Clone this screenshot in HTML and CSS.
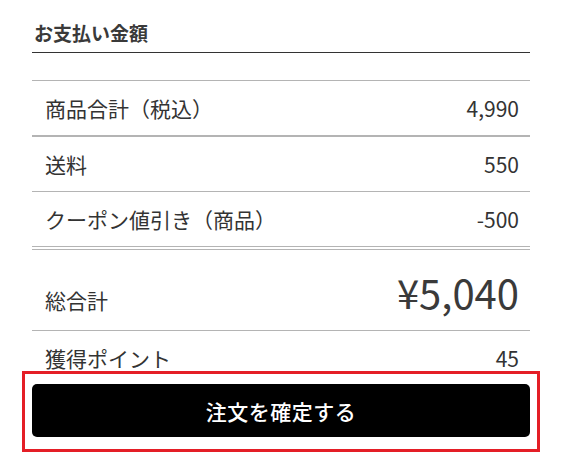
FILE: index.html
```html
<!DOCTYPE html>
<html lang="ja">
<head>
<meta charset="utf-8">
<title>お支払い金額</title>
<link rel="stylesheet" href="styles.css">
</head>
<body>
<main class="summary">
  <h2 class="title">お支払い金額</h2>
  <ul class="list">
    <li class="row row-first"><span>商品合計（税込）</span><span class="num">4,990</span></li>
    <li class="row"><span>送料</span><span class="num">550</span></li>
    <li class="row row-last"><span>クーポン値引き（商品）</span><span class="num">-500</span></li>
    <li class="row row-total"><span>総合計</span><span class="big">¥5,040</span></li>
    <li class="row row-points"><span>獲得ポイント</span><span class="num">45</span></li>
  </ul>
</main>
<div class="footer">
  <button class="confirm" type="button">注文を確定する</button>
</div>
</body>
</html>
```

FILE: styles.css
```css
html, body {
  margin: 0;
  padding: 0;
  background: #fff;
}

body {
  font-family: "Noto Sans CJK JP", "Noto Sans", sans-serif;
  color: #333;
  height: 472px;
  overflow: hidden;
}

.summary {
  margin: 0 34px 0 32px;
}

.title {
  margin: 0;
  padding: 20px 0 6px 2px;
  font-size: 19px;
  line-height: 26px;
  font-weight: 700;
  color: #3a3a3a;
  border-bottom: 1px solid #333;
}

.list {
  list-style: none;
  margin: 27px 0 0;
  padding: 0;
  border-top: 1px solid #b4b4b4;
}

.row {
  display: flex;
  justify-content: space-between;
  align-items: center;
  height: 54px;
  padding: 0 11px 0 13px;
  font-size: 21px;
  line-height: 30px;
  border-bottom: 1px solid #b4b4b4;
}

.row-first {
  border-bottom-width: 2px;
}

.row-last {
  height: 54px;
  border-bottom: 4px double #b4b4b4;
}

.row-total {
  height: auto;
  align-items: baseline;
  padding-top: 18px;
  padding-bottom: 14px;
}

.big {
  font-size: 40px;
  line-height: 48px;
  color: #3a3a3a;
}

.row-points {
  border-bottom: none;
}

.footer {
  position: fixed;
  left: 22px;
  top: 371px;
  width: 518px;
  height: 81px;
  box-sizing: border-box;
  border: 3px solid #e41e26;
  background: #fff;
  padding: 10px 7px 0;
}

.confirm {
  display: block;
  width: 100%;
  height: 53px;
  border: none;
  border-radius: 5px;
  background: #000;
  color: #fff;
  font-family: "Noto Sans CJK JP", "Noto Sans", sans-serif;
  font-size: 21px;
  font-weight: 500;
  letter-spacing: 0.5px;
  cursor: pointer;
}
```
